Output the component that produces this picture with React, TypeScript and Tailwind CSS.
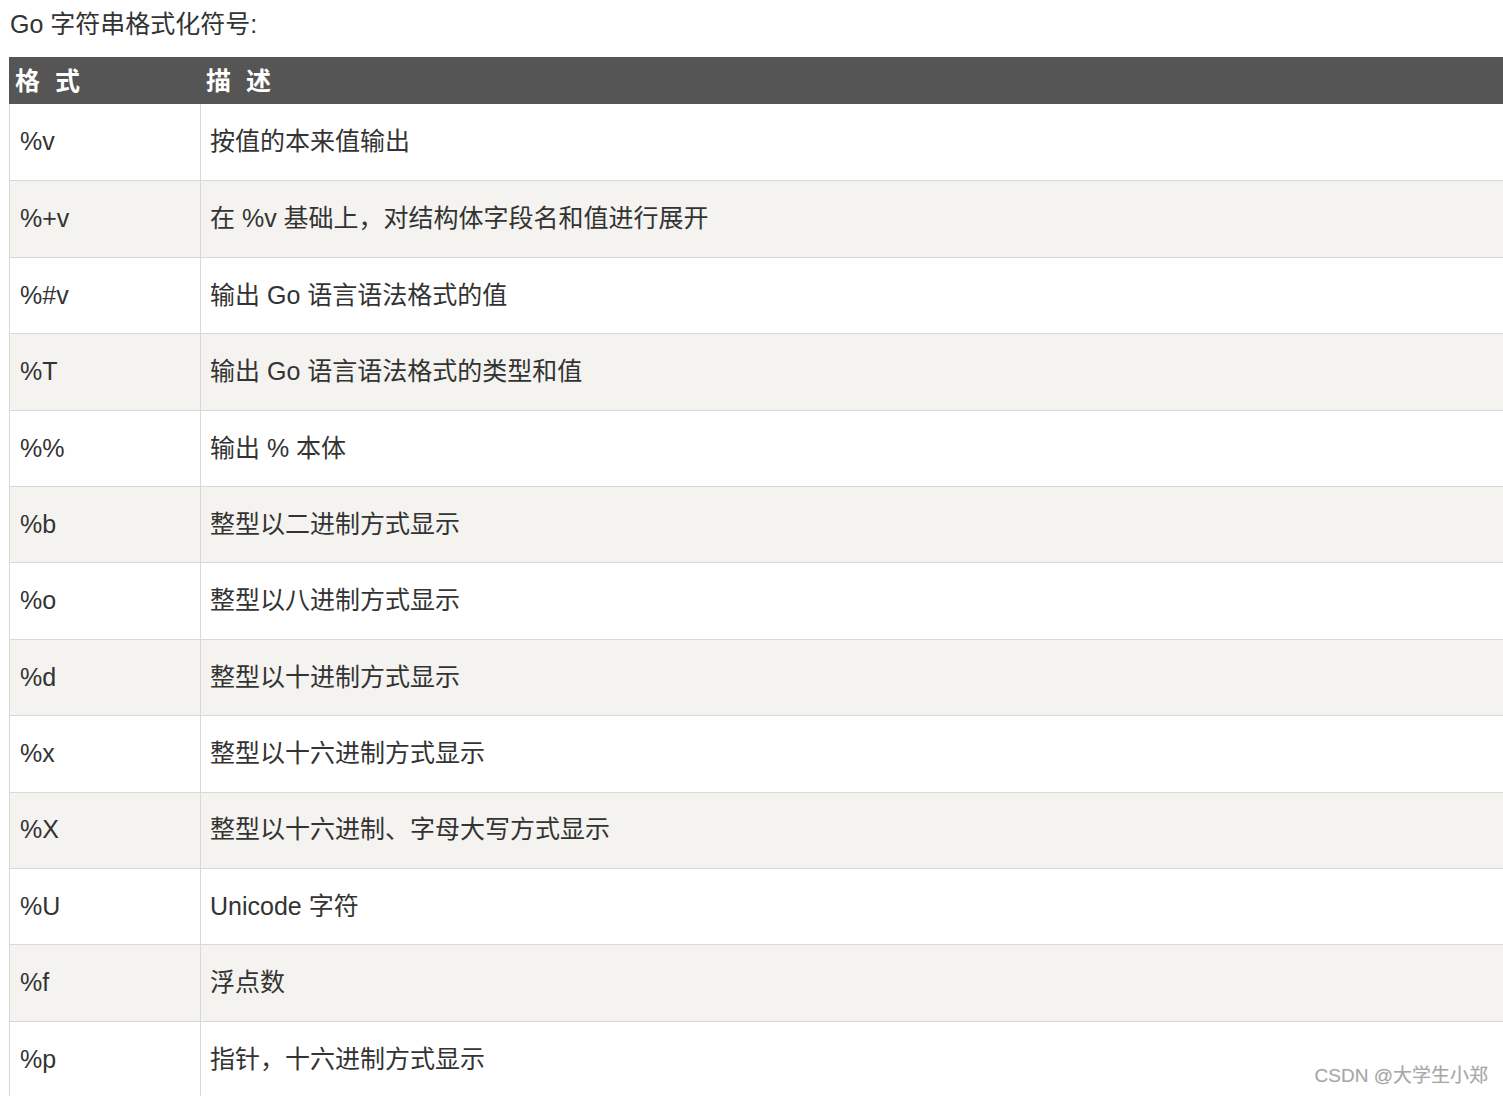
import React from "react";

const rows: [string, string][] = [
  ["%v", "按值的本来值输出"],
  ["%+v", "在 %v 基础上，对结构体字段名和值进行展开"],
  ["%#v", "输出 Go 语言语法格式的值"],
  ["%T", "输出 Go 语言语法格式的类型和值"],
  ["%%", "输出 % 本体"],
  ["%b", "整型以二进制方式显示"],
  ["%o", "整型以八进制方式显示"],
  ["%d", "整型以十进制方式显示"],
  ["%x", "整型以十六进制方式显示"],
  ["%X", "整型以十六进制、字母大写方式显示"],
  ["%U", "Unicode 字符"],
  ["%f", "浮点数"],
  ["%p", "指针，十六进制方式显示"],
];

export default function App() {
  return (
    <div
      className="relative h-[1096px] w-[1503px] overflow-hidden bg-white text-[#333333]"
      style={{ fontFamily: '"Liberation Sans", Arial, "Noto Sans CJK SC", sans-serif' }}
    >
      <div className="flex h-[57px] items-start pl-[10px] pt-[9px] text-[25px] leading-[30px]">
        Go 字符串格式化符号:
      </div>
      <div className="ml-[9px] flex flex-col">
        <div className="flex h-[47px] items-center bg-[#555555] pt-[3px] text-[25px] font-bold tracking-[4px] text-white">
          <div className="w-[191px] pl-[6px]">格 式</div>
          <div className="flex-1 pl-[6px]">描 述</div>
        </div>
        {rows.map(([k, v], i) => (
          <div
            key={k}
            className={`flex h-[76.4px] border-l border-[#d9d9d9] text-[25px] ${
              i > 0 ? "border-t" : ""
            } ${i % 2 === 1 ? "bg-[#f4f3f0]" : "bg-white"}`}
          >
            <div className="flex w-[191px] items-center border-r border-[#d9d9d9] pl-[10px]">{k}</div>
            <div className="flex flex-1 items-center pl-[9px]">{v}</div>
          </div>
        ))}
      </div>
      <div className="absolute bottom-[6px] right-[15px] text-[19px] text-[#a8a8a8] [text-shadow:0_0_1px_#ddd]">
        CSDN @大学生小郑
      </div>
    </div>
  );
}
